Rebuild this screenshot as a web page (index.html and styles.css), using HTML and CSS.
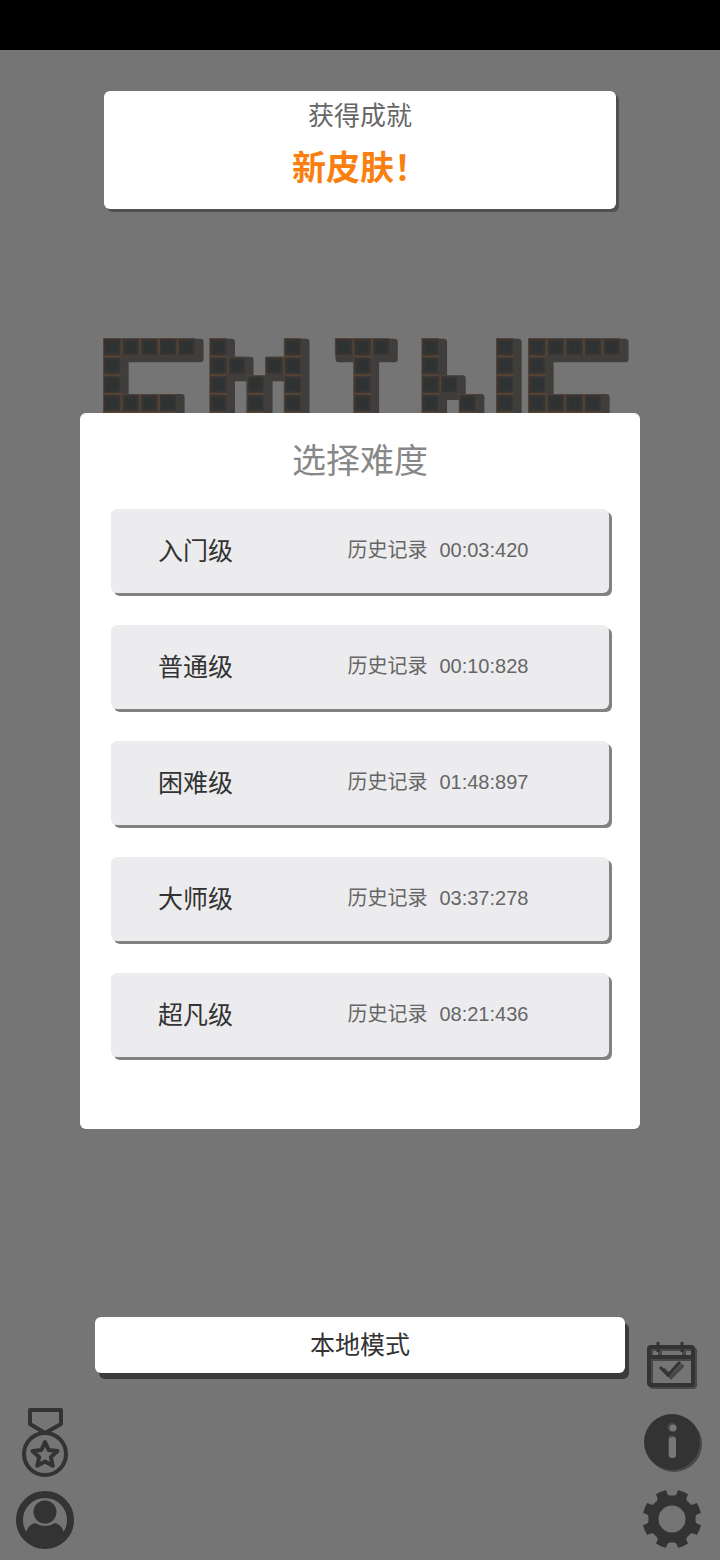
FILE: index.html
```
<!DOCTYPE html>
<html lang="zh-CN">
  <head>
    <meta charset="UTF-8" />
    <meta name="viewport" content="width=device-width, initial-scale=1.0" />
    <title>选择难度</title>
    <link rel="stylesheet" href="styles.css">
  </head>
  <body>
    <div class="status-bar"></div>

    <div class="toast" role="status">
      <p class="toast-label">获得成就</p>
      <p class="toast-name">新皮肤！</p>
    </div>

    <!-- Logo built from mine tiles, 56 units per tile -->
    <svg class="logo" viewBox="0 0 1578 225" aria-hidden="true">
      <defs>
        <pattern id="tile" width="56" height="56" patternUnits="userSpaceOnUse">
          <rect width="56" height="56" fill="#544335" />
          <rect x="3" y="3" width="49" height="49" fill="#353433" />
          <rect x="11" y="11" width="33" height="33" fill="#2e3232" />
        </pattern>
        <g id="letter-e">
          <g fill="#403e3d">
            <rect x="2" y="2" width="300" height="71" rx="10" />
            <rect x="2" y="2" width="75" height="240" />
            <rect x="2" y="168" width="243" height="72" rx="10" />
          </g>
          <g fill="url(#tile)">
            <rect width="277" height="52" />
            <rect width="53" height="225" />
            <rect y="168" width="222" height="57" />
          </g>
        </g>
      </defs>
      <use href="#letter-e" />
      <!-- M -->
      <g transform="translate(319 0)">
        <g fill="#403e3d">
          <rect x="2" y="2" width="75" height="240" rx="10" />
          <rect x="2" y="56" width="131" height="74" rx="10" />
          <rect x="112" y="112" width="78" height="130" />
          <rect x="168" y="56" width="131" height="74" rx="10" />
          <rect x="224" y="2" width="77" height="240" rx="10" />
        </g>
        <g fill="url(#tile)">
          <rect width="53" height="225" />
          <rect x="56" y="56" width="52" height="52" />
          <rect x="112" y="112" width="53" height="113" />
          <rect x="168" y="56" width="56" height="52" />
          <rect x="224" width="53" height="225" />
        </g>
      </g>
      <!-- I -->
      <g transform="translate(696 0)">
        <g fill="#403e3d">
          <rect x="2" y="2" width="187" height="71" rx="10" />
          <rect x="56" y="2" width="77" height="240" />
        </g>
        <g fill="url(#tile)">
          <rect width="165" height="52" />
          <rect x="56" width="53" height="225" />
        </g>
      </g>
      <!-- N -->
      <g transform="translate(956 0)">
        <g fill="#403e3d">
          <rect x="2" y="2" width="75" height="240" rx="10" />
          <rect x="2" y="112" width="131" height="74" rx="10" />
          <rect x="114" y="168" width="75" height="74" rx="10" />
          <rect x="226" y="2" width="75" height="240" rx="10" />
        </g>
        <g fill="url(#tile)">
          <rect width="53" height="225" />
          <rect x="56" y="112" width="52" height="52" />
          <rect x="112" y="168" width="53" height="57" />
          <rect x="224" width="53" height="225" />
        </g>
      </g>
      <use href="#letter-e" x="1276" />
    </svg>

    <main class="dialog">
      <h1>选择难度</h1>
      <div class="levels">
        <button class="level"><span class="level-name">入门级</span><span class="record"><span>历史记录</span><span>00:03:420</span></span></button>
        <button class="level"><span class="level-name">普通级</span><span class="record"><span>历史记录</span><span>00:10:828</span></span></button>
        <button class="level"><span class="level-name">困难级</span><span class="record"><span>历史记录</span><span>01:48:897</span></span></button>
        <button class="level"><span class="level-name">大师级</span><span class="record"><span>历史记录</span><span>03:37:278</span></span></button>
        <button class="level"><span class="level-name">超凡级</span><span class="record"><span>历史记录</span><span>08:21:436</span></span></button>
      </div>
    </main>

    <footer class="bottom">
      <nav class="side">
        <button class="icon-btn" aria-label="成就">
          <svg width="60" height="72" viewBox="0 0 60 72" fill="none" stroke="#333" stroke-width="4" stroke-linejoin="round">
            <path d="M14 4h31v14L29 27L14 18z" />
            <circle cx="29" cy="48" r="21" />
            <path d="M29 36l3.600 8l8.900 1l-6.600 6l1.800 8.800l-7.700-4.300l-7.700 4.300l1.800-8.800l-6.600-6l8.900-1z" />
          </svg>
        </button>
        <button class="icon-btn" aria-label="用户">
          <svg width="60" height="60" viewBox="0 0 60 60" fill="#333">
            <circle cx="29" cy="30" r="25.500" fill="none" stroke="#333" stroke-width="7" />
            <circle cx="29" cy="22" r="11.500" />
            <path d="M9 46Q11 35 19 33Q29 39 39 33Q47 35 49 46Q42 57 29 57Q16 57 9 46z" />
          </svg>
        </button>
      </nav>

      <button class="mode-btn">本地模式</button>

      <nav class="side">
        <button class="icon-btn" aria-label="签到">
          <svg width="60" height="50" viewBox="0 0 60 50" fill="none">
            <g stroke="#484848" stroke-width="4" transform="translate(2 2)">
              <rect x="5" y="5" width="44" height="38" rx="2" />
              <path d="M5 15h44M14 3v8M38 3v8M17 25l8 8l12-12" />
            </g>
            <g stroke="#333" stroke-width="4">
              <rect x="5" y="5" width="44" height="38" rx="2" />
              <path d="M5 15h44" />
              <path d="M16 25l8 8l12-13" stroke-width="3" />
              <path d="M14 0v10M38 0v10" stroke-width="3" />
            </g>
          </svg>
        </button>
        <button class="icon-btn" aria-label="信息">
          <svg width="60" height="60" viewBox="0 0 60 60">
            <circle cx="30" cy="33" r="28" fill="#484848" />
            <circle cx="28" cy="31" r="28" fill="#333" />
            <g fill="#484848">
              <circle cx="28" cy="16" r="4.500" />
              <rect x="24" y="24" width="8" height="23" rx="4" />
            </g>
            <g fill="#777">
              <circle cx="29" cy="17" r="3.500" />
              <rect x="25" y="26" width="7" height="21" rx="3" />
            </g>
          </svg>
        </button>
        <button class="icon-btn" aria-label="设置">
          <svg width="60" height="60" viewBox="0 0 60 60">
            <mask id="gear">
              <circle cx="28" cy="29" r="29.500" fill="#fff" />
              <circle cx="28" cy="29" r="13.500" />
              <g id="notches">
                <path id="notch" d="M20.500-4L23 3Q23.500 5.500 26 5.500H30Q32.500 5.500 33 3L35.500-4z" />
                <use href="#notch" transform="rotate(45 28 29)" />
                <use href="#notch" transform="rotate(90 28 29)" />
                <use href="#notch" transform="rotate(135 28 29)" />
              </g>
              <use href="#notches" transform="rotate(180 28 29)" />
            </mask>
            <rect x="-2" width="62" height="60" fill="#333" mask="url(#gear)" />
          </svg>
        </button>
      </nav>
    </footer>
  </body>
</html>
```
FILE: styles.css
```
* {
  box-sizing: border-box;
}

body {
  display: flex;
  flex-direction: column;
  align-items: center;
  min-height: 100vh;
  margin: 0;
  background-color: #757575;
  color: #333;
  font-family: "Liberation Sans", "Noto Sans CJK SC", sans-serif;
}

button {
  padding: 0;
  border: none;
  font-family: inherit;
  color: inherit;
  cursor: pointer;
}

.status-bar {
  width: 100%;
  height: 50px;
  background-color: #000;
}

.toast {
  width: 71%;
  margin-top: 41px;
  padding: 4px 0 10px;
  background-color: #fff;
  border-radius: 6px;
  box-shadow: 3px 3px #505050;
  text-align: center;
}

.toast p {
  margin: 0;
}

.toast-label {
  font-size: 26px;
  line-height: 42px;
  color: #666;
}

.toast-name {
  font-size: 34px;
  line-height: 62px;
  font-weight: bold;
  color: #f97f10;
}

.logo {
  display: block;
  width: 73%;
  margin: 129px 0 0 12px;
}

.dialog {
  width: calc(100% - 160px);
  padding: 22px 31px 72px;
  background-color: #fff;
  border-radius: 6px;
}

h1 {
  margin: 0 0 22px;
  font-size: 34px;
  line-height: 52px;
  font-weight: normal;
  text-align: center;
  color: #888;
}

.levels {
  display: flex;
  flex-direction: column;
  gap: 32px;
}

.level {
  display: grid;
  grid-template-columns: 42% 1fr;
  align-items: center;
  height: 84px;
  padding: 0 0 4px 47px;
  border-radius: 6px;
  background-color: #ececee;
  box-shadow: 3px 3px #828282;
  text-align: left;
}

.level-name {
  font-size: 25px;
}

.record {
  display: flex;
  align-items: baseline;
  gap: 12px;
  font-size: 20px;
  color: #666;
}

.bottom {
  display: grid;
  grid-template-columns: 60px 1fr 60px;
  gap: 19px;
  width: 100%;
  margin-top: auto;
  padding: 0 16px 10px;
}

.mode-btn {
  align-self: start;
  height: 56px;
  padding-bottom: 4px;
  border-radius: 6px;
  background-color: #fff;
  box-shadow: 4px 6px #3a3a3a;
  font-size: 25px;
}

.side {
  display: flex;
  flex-direction: column;
  justify-content: flex-end;
  gap: 12px;
  padding-top: 25px;
}

.side:last-child {
  gap: 19px;
}

.icon-btn {
  background: none;
}

.icon-btn svg {
  display: block;
  overflow: visible;
}
```
